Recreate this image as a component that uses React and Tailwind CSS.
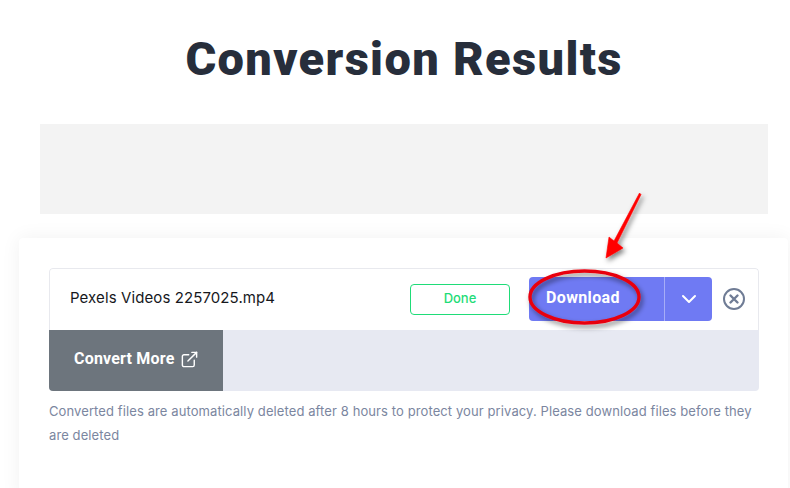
import { ExternalLink, ChevronDown } from "lucide-react";

export default function App() {
  return (
    <div className="relative w-[790px] h-[488px] overflow-hidden bg-white font-['Inter',sans-serif]">
      <h1 className="h-[124px] pt-[30px] pl-[18px] text-center text-[47px] leading-[58px] font-black tracking-[1.35px] text-[#272e3b] font-['Roboto',sans-serif]">
        Conversion Results
      </h1>
      <div className="mx-10 w-[728px] h-[90px] bg-[#f3f3f3]" />
      <div className="mt-6 ml-[19px] w-[769px] h-[260px] rounded-t bg-white px-[30px] pt-[30px] shadow-[0_0_20px_rgba(0,0,0,0.06)]">
        <div className="w-[710px] rounded overflow-hidden">
          <div className="h-[62px] flex items-center pl-[20px] pb-px bg-white rounded-t border-x border-t border-[#e8e9ee]">
            <span className="w-[340px] -mt-[2px] text-[15px] tracking-[0.1px] text-[#16181d]">Pexels Videos 2257025.mp4</span>
            <div className="w-[100px] h-[31px] flex items-center justify-center rounded border border-[#1fdc78] text-[13px] font-medium text-[#1fdc78]">
              Done
            </div>
            <div className="ml-[19px] w-[183px] h-[44px] flex rounded bg-[#6f7af3] text-white">
              <div className="w-[135px] flex items-center pl-[17px] pb-[3px] text-[16px] font-bold font-['Roboto',sans-serif] tracking-[0.35px]">Download</div>
              <div className="flex-1 flex items-center justify-center border-l border-[#a6adf7]">
                <ChevronDown className="w-6 h-6" strokeWidth={2} />
              </div>
            </div>
            <svg className="ml-[10px] w-6 h-6" viewBox="0 0 24 24" fill="none" stroke="#6f7c95" strokeWidth="2" strokeLinecap="round">
              <circle cx="12" cy="12" r="10" />
              <path d="M8.5 8.5l7 7M15.5 8.5l-7 7" strokeWidth="2.4" />
            </svg>
          </div>
          <div className="h-[61px] flex bg-[#e7e9f2]">
            <div className="w-[174px] flex items-center pl-[25px] pb-[3px] gap-[5px] bg-[#6d757d] text-white text-[16px] font-bold font-['Roboto',sans-serif] tracking-[0.2px]">
              Convert More
              <ExternalLink className="w-[19px] h-[19px]" strokeWidth={1.8} />
            </div>
          </div>
        </div>
        <p className="mt-2 w-[710px] text-[13px] leading-6 tracking-[0.1px] text-[#7b86a0]">
          Converted files are automatically deleted after 8 hours to protect your privacy. Please download files before they are deleted
        </p>
      </div>
      <svg className="absolute left-0 top-0 pointer-events-none" width="790" height="488" viewBox="0 0 790 488" fill="none">
        <defs>
          <filter id="s" x="-20%" y="-20%" width="140%" height="140%">
            <feDropShadow dx="2" dy="3" stdDeviation="2.5" floodColor="#000" floodOpacity="0.5" />
          </filter>
        </defs>
        <g filter="url(#s)">
          <ellipse cx="584.5" cy="297" rx="54.5" ry="26" stroke="#e8000f" strokeWidth="3.4" />
          <path d="M639.5 193L641 194.5L617 243L623 248L606 258L609 237L614 241Z" fill="#f00" stroke="#f00" strokeWidth="0.6" strokeLinejoin="round" />
        </g>
      </svg>
    </div>
  );
}
